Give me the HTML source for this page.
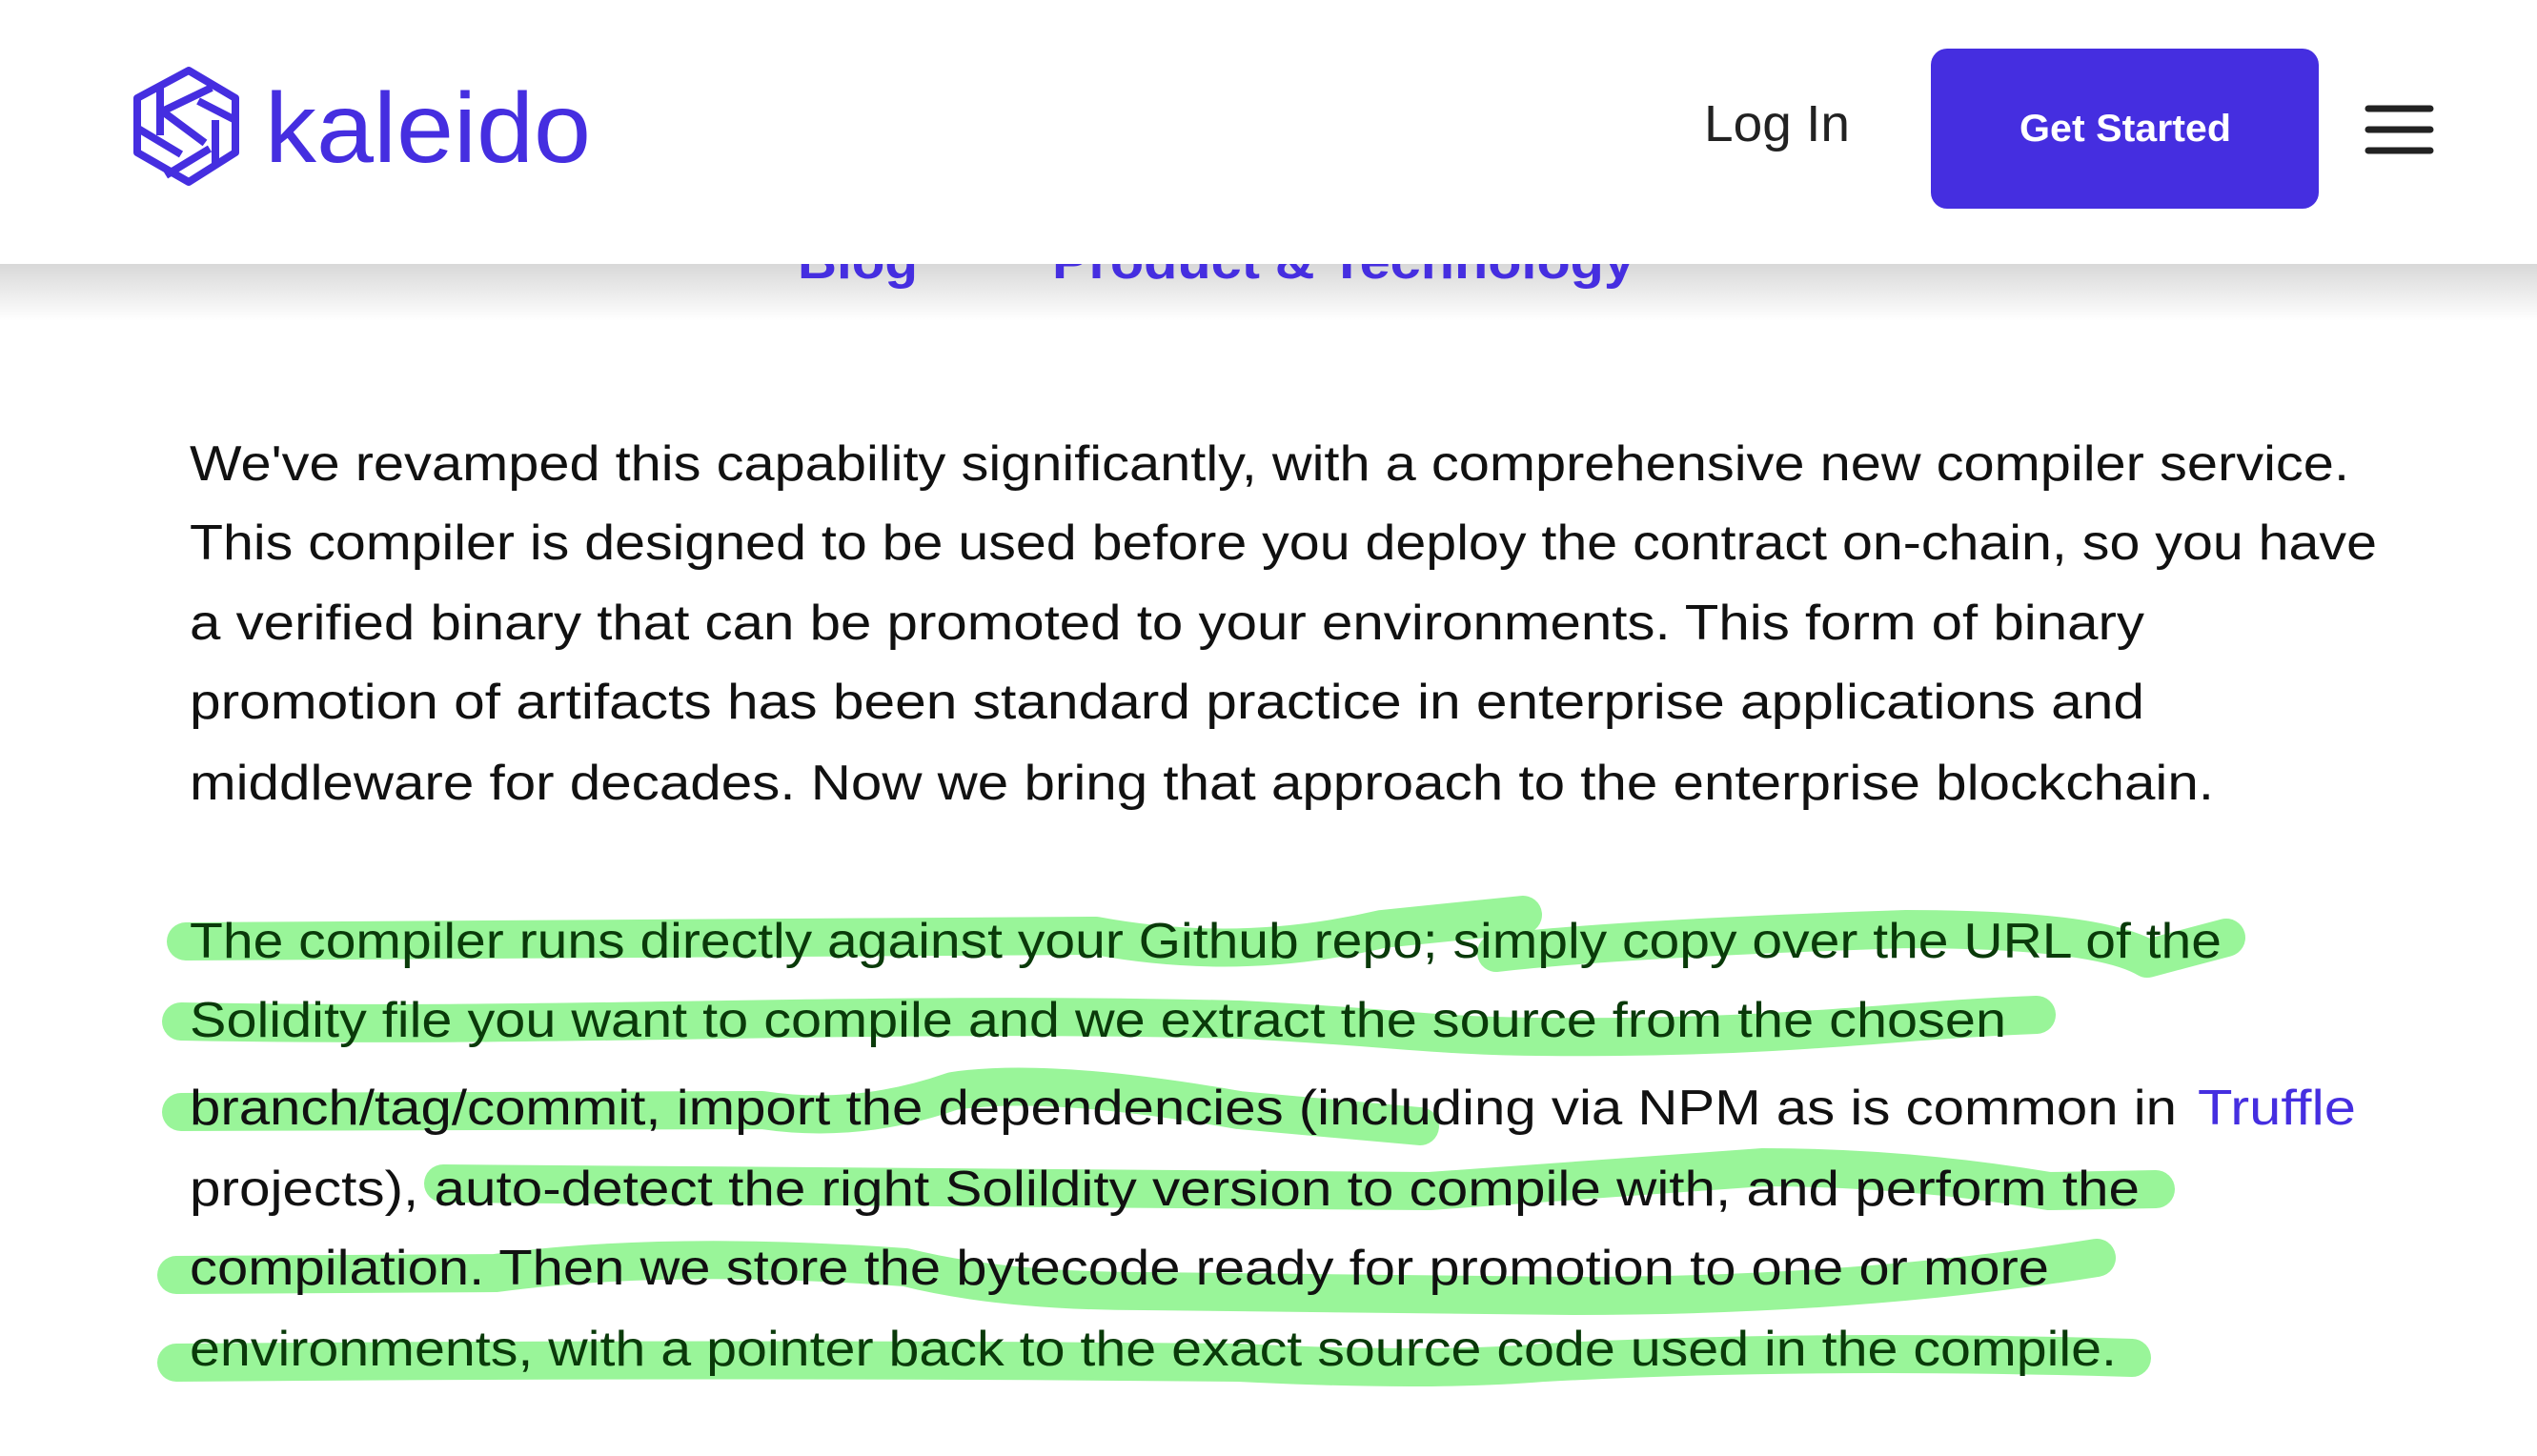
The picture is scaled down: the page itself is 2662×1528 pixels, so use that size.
<!DOCTYPE html>
<html><head><meta charset="utf-8"><style>
html,body{margin:0;padding:0;background:#fff;width:2662px;height:1528px;overflow:hidden;position:relative;font-family:"Liberation Sans",sans-serif}
#hdr{position:absolute;left:0;top:0;width:2662px;height:277px;background:#fff;z-index:3}
#shadow{position:absolute;left:0;top:277px;width:2662px;height:60px;background:linear-gradient(#d8d8d8,#fff);z-index:0}
svg{position:absolute;left:0;top:0}
</style></head><body>
<div id="shadow"></div>
<svg width="2662" height="1528" style="z-index:2">
 <text x="837" y="292" font-size="52" fill="#452ee0" font-weight="bold" textLength="126" lengthAdjust="spacingAndGlyphs">Blog</text>
 <text x="1104" y="292" font-size="52" fill="#452ee0" font-weight="bold" textLength="611" lengthAdjust="spacingAndGlyphs">Product &amp; Technology</text>
</svg>
<div id="hdr">
<svg width="2662" height="277">
 <g fill="none" stroke="#452ee0" stroke-width="8" stroke-linejoin="round" stroke-linecap="butt">
  <polygon points="198,74 247,103 247,160 198,191 144,160 144,103"/>
  <line x1="168" y1="92" x2="168" y2="142"/>
  <line x1="222" y1="92" x2="168" y2="118"/>
  <line x1="172" y1="118" x2="215" y2="150"/>
  <line x1="208" y1="106" x2="247" y2="126"/>
  <line x1="226" y1="126" x2="226" y2="172"/>
  <line x1="220" y1="156" x2="174" y2="184"/>
  <line x1="145" y1="135" x2="190" y2="162"/>
 </g>
 <text x="278" y="170" font-size="104" fill="#452ee0" textLength="342" lengthAdjust="spacingAndGlyphs">kaleido</text>
 <text x="1788" y="148" font-size="54" fill="#222" textLength="153" lengthAdjust="spacingAndGlyphs">Log In</text>
 <rect x="2026" y="51" width="407" height="168" rx="17" fill="#452ee0"/>
 <text x="2119" y="148" font-size="40" fill="#fff" font-weight="bold" textLength="222" lengthAdjust="spacingAndGlyphs">Get Started</text>
 <g stroke="#222" stroke-width="7" stroke-linecap="round">
  <line x1="2485" y1="114" x2="2550" y2="114"/>
  <line x1="2485" y1="136" x2="2550" y2="136"/>
  <line x1="2485" y1="158" x2="2550" y2="158"/>
 </g>
</svg>
</div>
<svg width="2662" height="1528" style="z-index:1">
 <g fill="none" stroke="#99f599" stroke-width="40" stroke-linecap="round" stroke-linejoin="round">
  <path d="M195,988 L1150,982 Q1300,1010 1450,975 L1598,960"/>
  <path d="M1570,1000 Q1700,985 2000,975 Q2200,975 2253,1006 L2336,984"/>
  <path d="M190,1072 C600,1080 900,1060 1300,1070 C1500,1080 1500,1090 1700,1088 C1900,1086 2000,1070 2137,1065"/>
  <path d="M190,1167 L800,1165 Q900,1180 1000,1145 Q1100,1130 1300,1165 L1490,1182"/>
  <path d="M465,1242 L1500,1250 Q1700,1235 1850,1225 Q2000,1225 2150,1250 L2262,1248"/>
  <path d="M185,1338 L520,1336 Q700,1312 950,1330 Q1050,1355 1200,1355 L1650,1360 Q1950,1360 2200,1320"/>
  <path d="M185,1430 Q800,1425 1300,1430 Q1500,1440 1620,1430 Q1900,1415 2237,1425"/>
 </g>
 <g font-size="52" fill="#111">
  <text x="199" y="504" textLength="2266" lengthAdjust="spacingAndGlyphs">We've revamped this capability significantly, with a comprehensive new compiler service.</text>
  <text x="199" y="587" textLength="2295" lengthAdjust="spacingAndGlyphs">This compiler is designed to be used before you deploy the contract on-chain, so you have</text>
  <text x="199" y="671" textLength="2051" lengthAdjust="spacingAndGlyphs">a verified binary that can be promoted to your environments. This form of binary</text>
  <text x="199" y="754" textLength="2051" lengthAdjust="spacingAndGlyphs">promotion of artifacts has been standard practice in enterprise applications and</text>
  <text x="199" y="839" textLength="2124" lengthAdjust="spacingAndGlyphs">middleware for decades. Now we bring that approach to the enterprise blockchain.</text>
  <text x="199" y="1005" textLength="2132" lengthAdjust="spacingAndGlyphs" fill="#0a3a0a">The compiler runs directly against your Github repo; simply copy over the URL of the</text>
  <text x="199" y="1088" textLength="1906" lengthAdjust="spacingAndGlyphs" fill="#0a3a0a">Solidity file you want to compile and we extract the source from the chosen</text>
  <text x="199" y="1180" textLength="2085" lengthAdjust="spacingAndGlyphs">branch/tag/commit, import the dependencies (including via NPM as is common in</text>
  <text x="2306" y="1180" textLength="166" lengthAdjust="spacingAndGlyphs" fill="#452ee0">Truffle</text>
  <text x="199" y="1265" textLength="2046" lengthAdjust="spacingAndGlyphs">projects), auto-detect the right Solildity version to compile with, and perform the</text>
  <text x="199" y="1348" textLength="1951" lengthAdjust="spacingAndGlyphs">compilation. Then we store the bytecode ready for promotion to one or more</text>
  <text x="199" y="1433" textLength="2022" lengthAdjust="spacingAndGlyphs" fill="#0a3a0a">environments, with a pointer back to the exact source code used in the compile.</text>
 </g>
</svg>
</body></html>
